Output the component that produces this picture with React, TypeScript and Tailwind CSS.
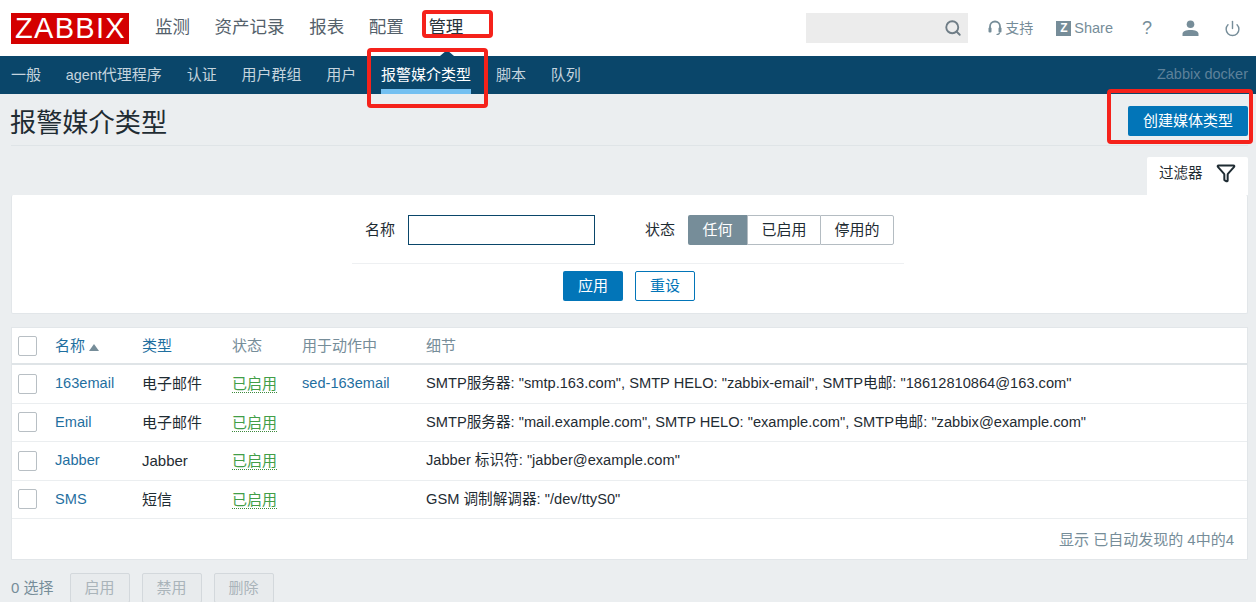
import { Search, Power, Filter } from "lucide-react";

const font = "font-['Arial','Liberation_Sans','Noto_Sans_CJK_SC',sans-serif]";

const topMenu = ["监测", "资产记录", "报表", "配置", "管理"];
const subMenu = ["一般", "agent代理程序", "认证", "用户群组", "用户", "报警媒介类型", "脚本", "队列"];

const rows = [
  {
    name: "163email",
    type: "电子邮件",
    action: "sed-163email",
    detail: 'SMTP服务器: "smtp.163.com", SMTP HELO: "zabbix-email", SMTP电邮: "18612810864@163.com"',
  },
  {
    name: "Email",
    type: "电子邮件",
    action: "",
    detail: 'SMTP服务器: "mail.example.com", SMTP HELO: "example.com", SMTP电邮: "zabbix@example.com"',
  },
  { name: "Jabber", type: "Jabber", action: "", detail: 'Jabber 标识符: "jabber@example.com"' },
  { name: "SMS", type: "短信", action: "", detail: 'GSM 调制解调器: "/dev/ttyS0"' },
];

function Checkbox() {
  return <div className="h-[20px] w-[19px] rounded-[2px] border border-[#b8bfc4] bg-white" />;
}

function HeadsetIcon() {
  return (
    <svg width="14" height="16" viewBox="0 0 14 16" fill="none">
      <path d="M2 9V6.5a5 5 0 0 1 10 0V9" stroke="#768d99" strokeWidth="1.8" />
      <rect x="0.5" y="7.5" width="3" height="5" rx="1" fill="#768d99" />
      <rect x="10.5" y="7.5" width="3" height="5" rx="1" fill="#768d99" />
      <path d="M11.5 12.5c0 1.4-1.2 2-3 2" stroke="#768d99" strokeWidth="1.2" />
    </svg>
  );
}

function UserIcon() {
  return (
    <svg width="17" height="16" viewBox="0 0 17 16" fill="#768d99">
      <circle cx="8.5" cy="4.2" r="3.8" />
      <path d="M0.5 16v-2c0-2.6 3.4-4 8-4s8 1.4 8 4v2z" />
    </svg>
  );
}

function TopBar() {
  return (
    <header className="flex h-[56px] items-center bg-white pl-[11px] pr-[15px]">
      <div className="flex h-[31px] w-[118px] items-center justify-center bg-[#d40000] pl-[1px] text-[29px] leading-none tracking-[1.3px] text-white">
        ZABBIX
      </div>
      <nav className="mb-[1px] ml-[26px] flex gap-[24.6px] text-[17.5px] text-[#54616b]">
        {topMenu.map((item) => (
          <span key={item} className={item === "管理" ? "text-[#2a353d]" : ""}>
            {item}
          </span>
        ))}
      </nav>
      <div className="ml-auto flex items-center text-[#768d99]">
        <div className="flex h-[30px] w-[162px] items-center justify-end bg-[#ececec] pr-[6px] text-[#6f7d86]">
          <Search size={18} strokeWidth={2.5} />
        </div>
        <div className="ml-[20px] flex items-center gap-[3px] text-[14px]">
          <HeadsetIcon />
          <span>支持</span>
        </div>
        <div className="ml-[23px] flex items-center gap-[3px] text-[14.5px]">
          <span className="flex h-[15px] w-[15px] items-center justify-center bg-[#768d99] text-[12px] font-bold leading-none text-white">
            Z
          </span>
          <span className="mt-[1px]">Share</span>
        </div>
        <span className="ml-[28px] w-[12px] text-center text-[18px]">?</span>
        <span className="ml-[29px] flex">
          <UserIcon />
        </span>
        <Power size={17} strokeWidth={2} className="ml-[25px]" />
      </div>
    </header>
  );
}

function SubNav() {
  return (
    <div className="relative flex h-[38px] items-center bg-[#0a466a] pl-[11px] pr-[8px] text-[15px] text-[#c5d4de]">
      <div className="absolute left-[440px] top-[-6px] h-0 w-0 border-x-[7px] border-b-[6px] border-x-transparent border-b-[#0a466a]" />
      <div className="flex h-full gap-[24.8px]">
        {subMenu.map((item) => (
          <span
            key={item}
            className={
              item === "报警媒介类型"
                ? "flex h-full items-center border-b-[5px] border-[#74c0f1] pt-[6px] text-white"
                : "flex h-full items-center pt-[1px]"
            }
          >
            {item === "agent代理程序" ? (
              <>
                <span className="text-[14.4px]">agent</span>代理程序
              </>
            ) : (
              item
            )}
          </span>
        ))}
      </div>
      <span className="ml-auto text-[14.5px] text-[#5d819a]">Zabbix docker</span>
    </div>
  );
}

function FilterPanel() {
  return (
    <>
      <div className="mt-[11px] flex justify-end pr-[8px]">
        <div className="flex h-[38px] w-[101px] items-start justify-between rounded-t-[2px] bg-white pl-[12px] pr-[12px] pt-[6px] text-[14.5px] text-[#1f2c33]">
          <span>过滤器</span>
          <Filter size={20} strokeWidth={2.4} className="text-[#1f2c33]" />
        </div>
      </div>
      <section className="ml-[11px] mr-[8px] h-[119px] rounded-[2px] border border-t-0 border-[#e2e6e9] bg-white pt-[20px] text-[#1f2c33]">
        <div className="ml-[340px] flex h-[49px] w-[552px] items-start border-b border-[#eef0f2] pl-[13px]">
          <span className="mt-[4px] text-[15px]">名称</span>
          <div className="ml-[13px] h-[30px] w-[187px] border border-[#0a466a]" />
          <span className="ml-[50px] mt-[4px] text-[15px]">状态</span>
          <div className="ml-[13px] flex h-[30px] text-[15px]">
            <span className="flex w-[59px] items-center justify-center rounded-l-[2px] bg-[#768d99] text-white">任何</span>
            <span className="flex w-[73px] items-center justify-center border-y border-l border-[#b4bcc2]">已启用</span>
            <span className="flex w-[74px] items-center justify-center rounded-r-[2px] border border-[#b4bcc2]">停用的</span>
          </div>
        </div>
        <div className="mt-[7px] flex justify-center gap-[12px] pr-[1px] text-[15px]">
          <span className="flex h-[30px] w-[60px] items-center justify-center rounded-[2px] bg-[#0275b8] text-white">应用</span>
          <span className="flex h-[30px] w-[60px] items-center justify-center rounded-[2px] border border-[#0275b8] text-[#0275b8]">重设</span>
        </div>
      </section>
    </>
  );
}

function MediaTable() {
  return (
    <section className="ml-[11px] mr-[8px] mt-[13px] h-[233px] border border-[#e2e6e9] bg-white text-[15px]">
      <div className="flex h-[37px] items-center border-b-2 border-[#dfe4e7] pl-[6px]">
        <Checkbox />
        <span className="ml-[18px] mt-[1px] flex w-[87px] items-center text-[#1f6f9f]">
          名称
          <span className="ml-[4px] mt-[2px] h-0 w-0 border-x-[5px] border-b-[7px] border-x-transparent border-b-[#768d99]" />
        </span>
        <span className="mt-[1px] w-[90px] text-[#1f6f9f]">类型</span>
        <span className="mt-[1px] w-[70px] text-[#768d99]">状态</span>
        <span className="mt-[1px] w-[124px] text-[#768d99]">用于动作中</span>
        <span className="mt-[1px] text-[#768d99]">细节</span>
      </div>
      {rows.map((row) => (
        <div key={row.name} className="flex h-[38.5px] items-center border-b border-[#ebeef0] pl-[6px]">
          <Checkbox />
          <span className="ml-[18px] mt-[1px] w-[87px] text-[14.6px] text-[#1f6f9f]">{row.name}</span>
          <span className="mt-[1px] w-[90px] text-[#1f2c33]">{row.type}</span>
          <span className="mt-[1px] w-[70px]">
            <span className="border-b border-dotted border-[#3c8a3c] leading-[18px] text-[#429e47]">已启用</span>
          </span>
          <span className="mt-[1px] w-[124px] text-[14.6px] text-[#1f6f9f]">{row.action}</span>
          <span className="mt-[1px] text-[14.65px] text-[#1f2c33]">{row.detail}</span>
        </div>
      ))}
      <div className="flex justify-end pr-[13px] pt-[10px] text-[15px] text-[#768d99]">显示 已自动发现的 4中的4</div>
    </section>
  );
}

function Annotation({ className }: { className: string }) {
  return <div className={`absolute rounded-[4px] border-[4px] border-[#f5221b] ${className}`} />;
}

export default function App() {
  return (
    <div className={`relative h-[602px] w-[1256px] overflow-hidden bg-[#ebeef0] ${font}`}>
      <TopBar />
      <SubNav />
      <div className="ml-[11px] mr-[8px] flex h-[52px] items-start justify-between border-b border-[#dfe4e7] pt-[12px]">
        <h1 className="-ml-[1px] text-[26.2px] leading-[34px] text-[#1f2c33]">报警媒介类型</h1>
        <span className="flex h-[30px] w-[120px] items-center justify-center rounded-[2px] bg-[#0275b8] pt-[1px] text-[15px] text-white">
          创建媒体类型
        </span>
      </div>
      <FilterPanel />
      <MediaTable />
      <div className="ml-[11px] mt-[13px] flex items-center text-[15px] text-[#768d99]">
        <span>0 选择</span>
        <div className="ml-[16px] flex gap-[12px] text-[#aab4ba]">
          {["启用", "禁用", "删除"].map((label) => (
            <span key={label} className="flex h-[30px] w-[60px] items-center justify-center rounded-[2px] border border-[#d3d8dc] bg-[#e8ebed]">
              {label}
            </span>
          ))}
        </div>
      </div>
      <Annotation className="left-[422px] top-[10px] h-[28px] w-[71px]" />
      <Annotation className="left-[367px] top-[48px] h-[60px] w-[121px]" />
      <Annotation className="left-[1107px] top-[89px] h-[55px] w-[146px]" />
    </div>
  );
}
